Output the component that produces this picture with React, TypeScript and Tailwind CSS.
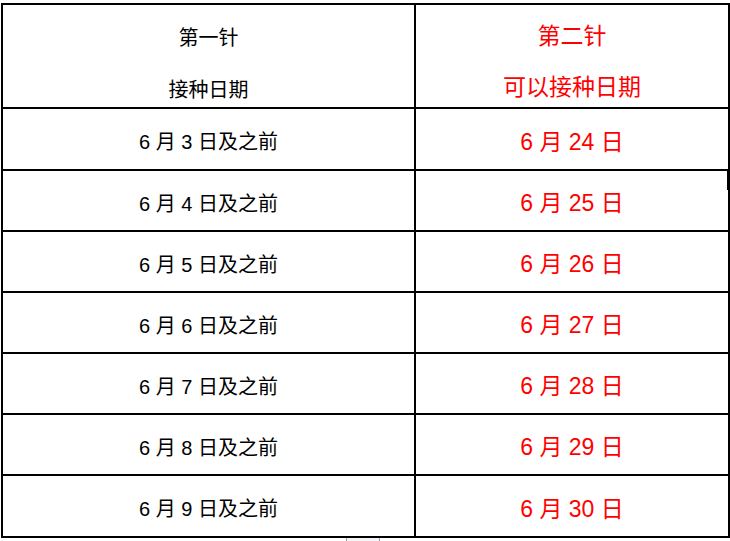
const rows = [
  ["3", "24"],
  ["4", "25"],
  ["5", "26"],
  ["6", "27"],
  ["7", "28"],
  ["8", "29"],
  ["9", "30"],
];

const font = { fontFamily: '"Liberation Sans", "Noto Sans CJK SC", sans-serif' };

export default function App() {
  return (
    <div className="relative h-[541px] w-[730px] bg-white pl-[1px] pt-[3px]" style={font}>
      <table className="w-[727px] table-fixed border-collapse">
        <colgroup>
          <col className="w-[413px]" />
          <col className="w-[314px]" />
        </colgroup>
        <tbody>
          <tr className="h-[104px]">
            <td className="border-2 border-black text-center align-top text-[20px] text-black">
              <div className="mt-[18px] leading-[30px]">第一针</div>
              <div className="mt-[22px] leading-[30px]">接种日期</div>
            </td>
            <td className="border-2 border-black text-center align-top text-[23px] text-[#ff0000]">
              <div className="mt-[15px] leading-[32px]">第二针</div>
              <div className="mt-[19px] leading-[32px]">可以接种日期</div>
            </td>
          </tr>
          {rows.map(([a, b], i) => (
            <tr key={a} className={i === 0 || i === rows.length - 1 ? "h-[62px]" : "h-[61px]"}>
              <td className="border-2 border-black pt-[6px] text-center text-[20px] text-black">
                6 月 {a} 日及之前
              </td>
              <td className="border-2 border-black pt-[6px] text-center text-[23px] text-[#ff0000]">
                6 月 {b} 日
              </td>
            </tr>
          ))}
        </tbody>
      </table>
      <div className="absolute left-[727px] top-[170px] h-[20px] w-[3px] bg-black" />
      <div className="absolute left-[346px] top-[538px] h-[3px] w-[34px] border-x border-gray-400 bg-gray-100" />
    </div>
  );
}
